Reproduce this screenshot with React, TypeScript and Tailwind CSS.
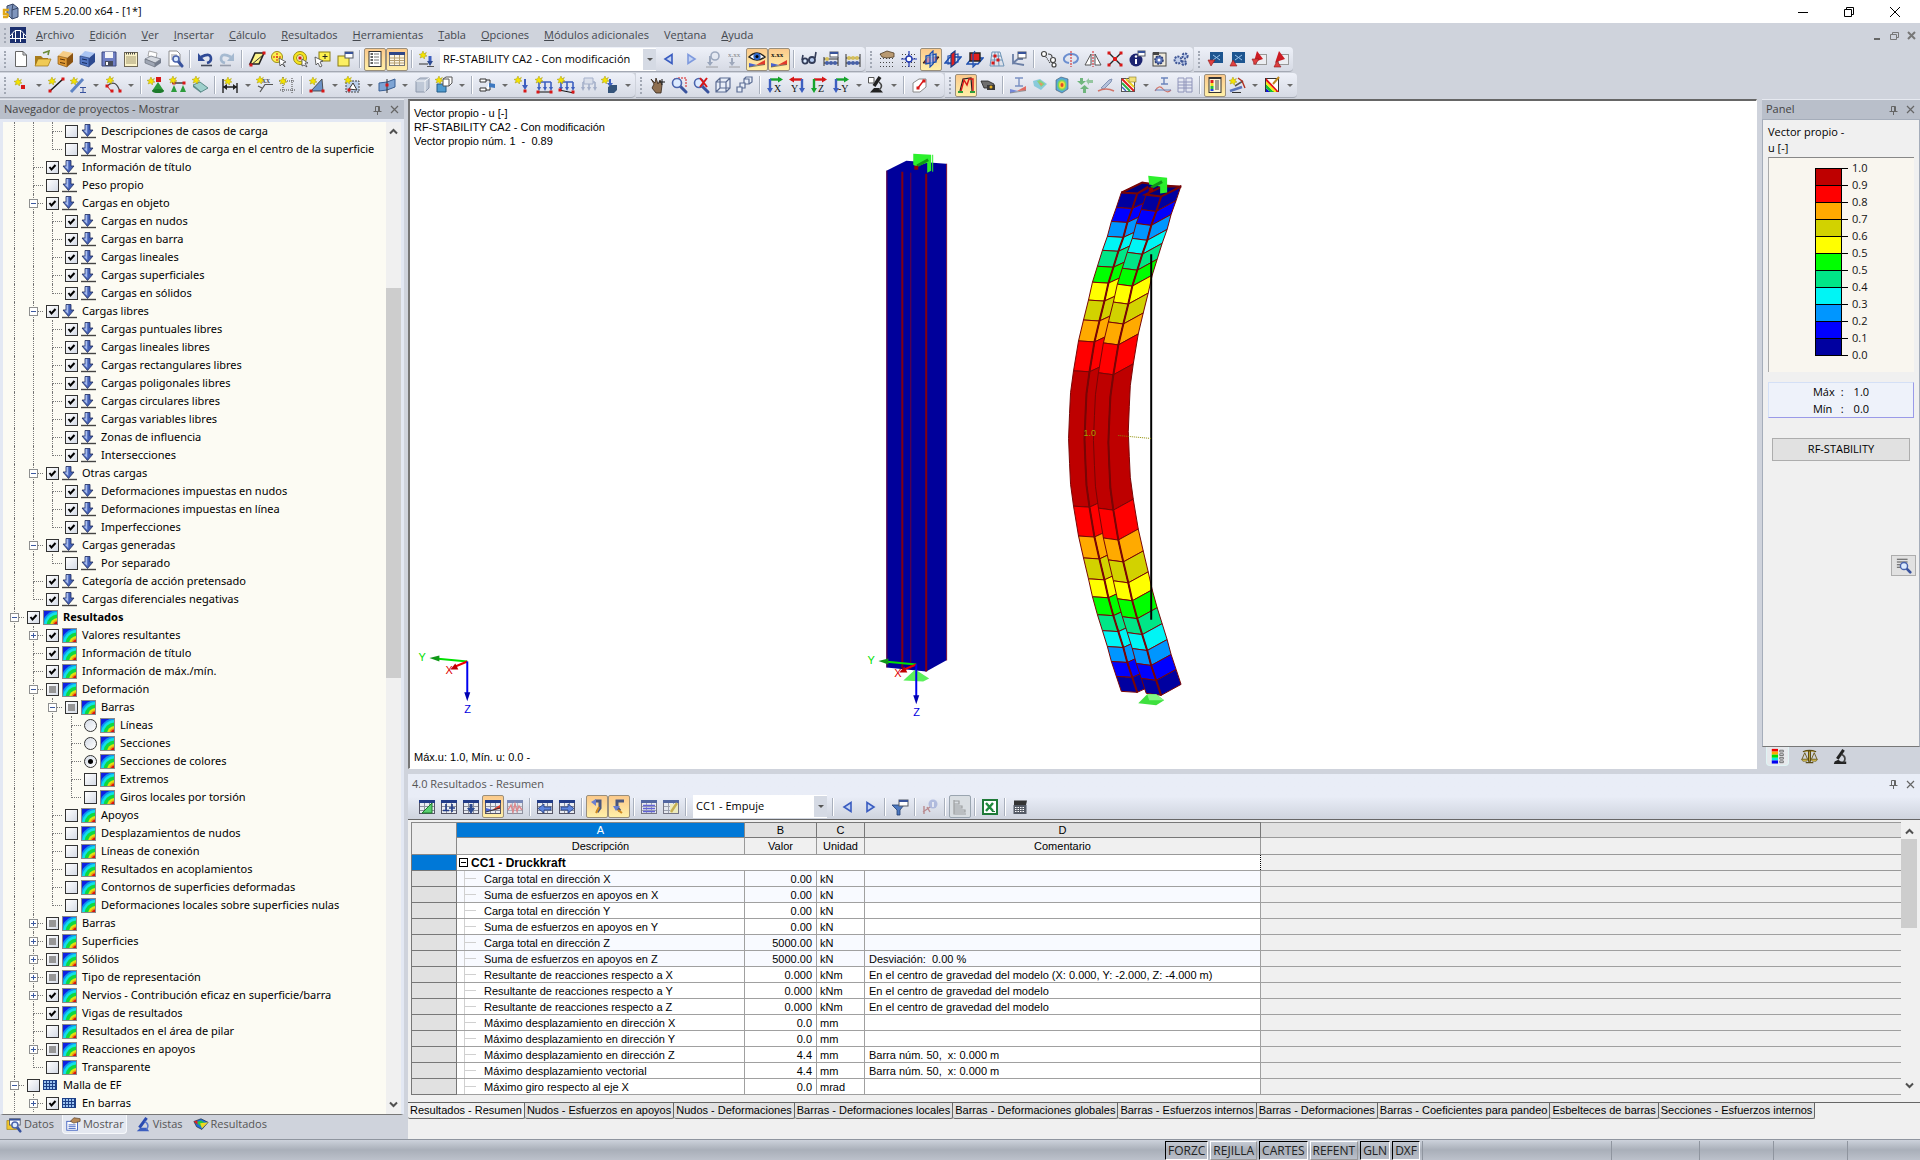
import React, { useState } from 'react';
import clsx from 'clsx';

/* ---------- small drawing parts shared by the toolbar icons ---------- */

const Star = ({ x = 4, y = 4 }: { x?: number; y?: number }) => (
  <g transform={`translate(${x} ${y})`}>
    <path d="M0 -4 L1 -1.2 L3.4 -2.6 L2 0 L4 1 L1.6 1.6 L1.4 4 L-0.4 2 L-3 3 L-1.8 0.6 L-4 -0.6 L-1.4 -1.2 Z" fill="#f4e400" stroke="#a89a10" strokeWidth="0.5" />
  </g>
);

const Dot = ({ x, y, c = '#d81818' }: { x: number; y: number; c?: string }) => (
  <rect x={x - 1.5} y={y - 1.5} width="3" height="3" fill={c} />
);

const Sheet = ({ x, y, w, h, fill = '#fff' }: { x: number; y: number; w: number; h: number; fill?: string }) => (
  <g>
    <rect x={x} y={y} width={w} height={h} fill={fill} stroke="#555a66" strokeWidth="1" />
    <rect x={x} y={y} width={w} height="2" fill="#38539a" />
  </g>
);

// Grid sheet used by the table toolbar
const Grid = () => (
  <g>
    <rect x="1.5" y="2.5" width="15" height="13" fill="#e9ecf2" stroke="#556" />
    <path d="M2 8.5H16M2 12.5H16M6.500 5V15M11.500 5V15" stroke="#8a8f9c" />
    <rect x="1" y="2" width="16" height="3" fill="#223c88" />
  </g>
);

const Lens = ({ x = 8, y = 7, r = 4.5 }: { x?: number; y?: number; r?: number }) => (
  <g>
    <path d={`M${x + r - 1} ${y + r - 1} L16 16`} stroke="#39539e" strokeWidth="3" strokeLinecap="round" />
    <circle cx={x} cy={y} r={r} fill="#dcebff" stroke="#4a64ad" strokeWidth="1.6" />
  </g>
);

const Dots = () => (
  <path d="M2 4.5H16M2 8.5H16M2 12.5H16M2 16.5H16" stroke="#444" strokeWidth="1" strokeDasharray="1 2" />
);

const Wedge = ({ y = 12 }: { y?: number }) => (
  <g>
    <path d={`M1 ${y + 5} L1 ${y + 1} L9 ${y + 3} Z`} fill="#4a64d0" />
    <path d={`M17 ${y - 2} L17 ${y + 2.5} L8 ${y + 3} Z`} fill="#e23a2a" />
    <path d={`M1 ${y + 5} L17 ${y + 2.5}`} stroke="#333" strokeWidth="0.6" />
  </g>
);

const ViewAxes = ({ a, b, t }: { a: string; b: string; t: string }) => (
  <g>
    <path d="M4 3.5H15" stroke={a} strokeWidth="2.4" />
    <path d="M12 0.5L17 3.5L12 6.5Z" fill={a} />
    <path d="M4 3V14" stroke={b} strokeWidth="2.4" />
    <path d="M1 12H7L4 17Z" fill={b} />
    <text x={t.length > 1 ? 6 : 8} y="16" fontSize="10" fontFamily="Liberation Serif, serif" fill="#111">{t}</text>
  </g>
);

const LoadFrame = ({ c = '#3d5fc0' }: { c?: string }) => (
  <g>
    <path d="M4 6V13M10 6V13M4 6H16M16 6V13" stroke={c} strokeWidth="1.6" fill="none" />
    <path d="M2 11H6L4 15ZM8 11H12L10 15ZM14 11H18L16 15Z" fill={c} />
  </g>
);

const icons: Record<string, React.ReactNode> = {
  nuevo: <path d="M3.5 1.5H11L14.5 5V16.5H3.5Z M11 1.5V5H14.5" fill="#fff" stroke="#666" />,
  abrir: <g><path d="M9 3L15 1L14 5" fill="none" stroke="#6a8a36" strokeWidth="1.6" /><path d="M1 6H7L9 8H14V15H1Z" fill="#a87c1c" /><path d="M4 9H17L14 16H1Z" fill="#f0ca55" stroke="#9c7416" strokeWidth="0.7" /></g>,
  archivadorNaranja: <g><path d="M2 6L7 1L17 3L11 8Z" fill="#f6cd86" /><path d="M2 6L11 8V17L2 14Z" fill="#e09a35" stroke="#8e5b13" strokeWidth="0.7" /><path d="M11 8L17 3V12L11 17Z" fill="#8c5412" /><path d="M4 9L9 10M4 12.5L9 13.5" stroke="#5b3508" /></g>,
  archivadorAzul: <g><path d="M2 6L7 1L17 3L11 8Z" fill="#a9c4f2" /><path d="M2 6L11 8V17L2 14Z" fill="#5478c4" stroke="#243d7a" strokeWidth="0.7" /><path d="M11 8L17 3V12L11 17Z" fill="#2d4a90" /><path d="M4 9L9 10M4 12.5L9 13.5" stroke="#172a5c" /></g>,
  guardar: <g><path d="M2 2H16V16H2Z" fill="#6f7fc4" stroke="#3e4a80" /><rect x="5" y="2" width="8" height="6" fill="#f3f4f8" /><rect x="5" y="11" width="8" height="5" fill="#474c5c" /><rect x="6" y="12" width="2" height="3" fill="#fff" /></g>,
  informe: <g><rect x="2.5" y="2.5" width="13" height="14" fill="#fbf3c9" stroke="#6d6655" /><path d="M4 7H14M4 9H14M4 11H14M4 13H14" stroke="#a49a72" /><path d="M4 3.5H14" stroke="#444" strokeWidth="2" strokeDasharray="1 1" /></g>,
  imprimir: <g><path d="M5 1L13 3L12 8L4 6Z" fill="#fff" stroke="#888" strokeWidth="0.7" /><path d="M1 9L7 6L17 9L11 13Z" fill="#d5d9e0" stroke="#6d7380" strokeWidth="0.7" /><path d="M1 9V13L11 17V13Z" fill="#9fa6b4" stroke="#5e6470" strokeWidth="0.6" /><path d="M11 13L17 9V13L11 17Z" fill="#747c8c" /></g>,
  previa: <g><path d="M3 1H11L14 4V16H3Z" fill="#fff" stroke="#777" strokeWidth="0.8" /><path d="M5 5H11M5 7H9M5 9H8" stroke="#999" /><Lens x={10} y={9} r={3} /></g>,
  deshacer: <g><path d="M2 3V11H9Z" fill="#2f4a96" /><path d="M5 7Q15 2 15 9Q15 12 11 13" fill="none" stroke="#2f4a96" strokeWidth="2.6" /><path d="M5 15.5H16" stroke="#444b5c" strokeWidth="1.6" /></g>,
  rehacer: <g opacity="0.6"><path d="M16 3V11H9Z" fill="#7c9cbc" /><path d="M13 7Q3 2 3 9Q3 12 7 13" fill="none" stroke="#7c9cbc" strokeWidth="2.6" /><path d="M2 15.5H13" stroke="#6b7284" strokeWidth="1.6" /></g>,
  selParalelo: <g><path d="M7 3H16L11 14H2Z" fill="#fcf48a" stroke="#222" strokeWidth="1.6" /><path d="M15 5L3 15" stroke="#333" /><Dot x={3} y={15} /><Dot x={16} y={3} /></g>,
  selCirculo: <g><circle cx="7" cy="7" r="5.5" fill="#fcf04e" stroke="#9b8d14" /><path d="M7 3V11M3 7H11" stroke="#d81818" strokeDasharray="2 1" /><path d="M9 8L16 12L13 13L15 17L12 14L10 16Z" fill="#fff" stroke="#444" strokeWidth="0.8" /></g>,
  selAnillo: <g><circle cx="8" cy="8" r="6.5" fill="#f8e61e" stroke="#9b8d14" /><circle cx="8" cy="8" r="3.5" fill="#fdf9d0" stroke="#9b8d14" /><Dot x={8} y={8} /><path d="M10 9L16 13L13 13L15 17L12 15L10 16Z" fill="#fff" stroke="#444" strokeWidth="0.8" /></g>,
  selCaja: <g><rect x="5" y="2" width="11" height="9" fill="#fcf04e" stroke="#8a7d12" /><path d="M11 4V9M8.5 6.5H13.5" stroke="#222" /><path d="M1 7L9 11L6 12L8 16L6 17L4 13L2 15Z" fill="#fff" stroke="#444" strokeWidth="0.8" /></g>,
  ventana: <g><rect x="2" y="6" width="11" height="10" fill="#fcef62" stroke="#8a7d12" /><Sheet x={9} y={2} w={8} h={6} /></g>,
  lista: <g><rect x="3" y="1.5" width="12" height="15" fill="#fff" stroke="#333" /><path d="M4.5 4H7M4.5 7H7M4.5 10H7M4.5 13H7" stroke="#333" strokeWidth="1.6" /><path d="M8 4H13M8 7H13M8 10H13M8 13H13" stroke="#777" /></g>,
  tabla: <g><rect x="1.5" y="2.5" width="15" height="13" fill="#fdf6e2" stroke="#777" /><rect x="1" y="2" width="16" height="3" fill="#2f4687" /><path d="M2 8H16M2 10.5H16M2 13H16M6.5 5V15M11.5 5V15" stroke="#b59e70" /></g>,
  cargaNueva: <g><Star x={5} y={5} /><path d="M1 14H10" stroke="#333" /><path d="M12 6V12" stroke="#3d5fc0" strokeWidth="3" /><path d="M9 11H15L12 16Z" fill="#2d4a90" /><path d="M9 16.5H16" stroke="#555" /></g>,
  anterior: <path d="M12 4.500V13.500L5 9Z" fill="#c4d4f4" stroke="#3a5cc0" strokeWidth="1.6" />,
  siguiente: <path d="M6 4.500V13.500L13 9Z" fill="#c4d4f4" stroke="#7f9ade" strokeWidth="1.6" />,
  siguienteTabla: <path d="M6 4.500V13.500L13 9Z" fill="#c4d4f4" stroke="#3a5cc0" strokeWidth="1.6" />,
  filtroCarga: <g opacity="0.6"><circle cx="11" cy="6" r="4" fill="#e4e9f2" stroke="#6d7f9e" strokeWidth="1.6" /><path d="M6 6V14" stroke="#6d7f9e" strokeWidth="2" /><path d="M3 12H9L6 16Z" fill="#6d7f9e" /><path d="M2 17H14" stroke="#777" /></g>,
  valoresGris: <g opacity="0.7"><text x="2" y="7" fontSize="7" fontFamily="Liberation Serif, serif" fill="#555">x.xx</text><path d="M6 8V14" stroke="#8591a8" strokeWidth="2" /><path d="M3 12H9L6 16Z" fill="#8591a8" /><path d="M3 17H14" stroke="#888" /></g>,
  ojo: <g><path d="M1 7Q9 -1 17 7Q9 13 1 7Z" fill="#fff" stroke="#222" strokeWidth="1.4" /><circle cx="9" cy="6.5" r="3.6" fill="#2d66c8" /><circle cx="9" cy="6.5" r="1.5" fill="#000" /><Wedge y={12} /></g>,
  valores: <g><text x="1" y="7" fontSize="7" fontWeight="bold" fontFamily="Liberation Serif, serif" fill="#111">x.xx</text><Wedge y={12} /></g>,
  gafas: <g><circle cx="5" cy="11" r="2.6" fill="#dcebff" stroke="#333c58" strokeWidth="1.8" /><circle cx="12" cy="10" r="3" fill="#b8cdf0" stroke="#333c58" strokeWidth="1.8" /><path d="M2 10L3 5M15 8L16 2M8 10H9" stroke="#333c58" strokeWidth="1.6" /></g>,
  abacoVentana: <g><path d="M2 7V16M16 7V16M2 9H16M2 13H16" stroke="#333" /><circle cx="5" cy="13" r="2" fill="#4660a8" /><circle cx="9" cy="13" r="2" fill="#4660a8" /><circle cx="13" cy="13" r="2" fill="#4660a8" /><circle cx="5" cy="9" r="2" fill="#d6c05a" /><Sheet x={8} y={2} w={8} h={5} /></g>,
  abaco: <g><path d="M2 4V17M16 4V17M2 8H16M2 13H16" stroke="#333" /><circle cx="5" cy="8" r="2" fill="#d6c05a" /><circle cx="9" cy="8" r="2" fill="#d6c05a" /><circle cx="13" cy="8" r="2" fill="#d6c05a" /><circle cx="5" cy="13" r="2" fill="#4660a8" /><circle cx="9" cy="13" r="2" fill="#4660a8" /><circle cx="13" cy="13" r="2" fill="#4660a8" /></g>,
  mallaMano: <g><Dots /><path d="M2 4L9 1L16 3V7L9 8L4 7Z" fill="#b99a72" stroke="#4e3b22" strokeWidth="0.8" /></g>,
  mallaPunto: <g><Dots /><path d="M9 1V17M1 9H17" stroke="#2038b0" strokeWidth="1.2" /><circle cx="9" cy="9" r="3" fill="#fff" stroke="#2038b0" strokeWidth="1.4" /></g>,
  planoRojo: <g><path d="M1 13L6 7H17L12 13Z" fill="#e02020" stroke="#222" /><path d="M4 6L14 4V12L4 14Z" fill="#b9d6ff" fillOpacity="0.6" stroke="#1d4fb0" strokeWidth="1.4" /><path d="M11 1L8 4V17L11 14Z" fill="#b9d6ff" fillOpacity="0.6" stroke="#1d4fb0" strokeWidth="1.2" /></g>,
  planoAzul: <g><path d="M1 13L6 7H17L12 13Z" fill="none" stroke="#1d4fb0" strokeWidth="1.4" /><path d="M4 6L14 4V12L4 14Z" fill="none" stroke="#1d4fb0" strokeWidth="1.2" /><path d="M11 1L7 4V17L11 14Z" fill="#e02020" stroke="#1d3c80" strokeWidth="1.2" /></g>,
  planoLleno: <g><path d="M1 14L6 8H17L12 14Z" fill="none" stroke="#1d4fb0" strokeWidth="1.4" /><path d="M4 3H14V11H4Z" fill="#e02020" stroke="#222" strokeWidth="1.4" /><path d="M9 1L7 4V17L10 14" fill="none" stroke="#1d4fb0" strokeWidth="1.2" /></g>,
  red: <g><path d="M4 2H12L16 16H2ZM4 6H13M3 10H14M7 2L6 16M10 2L11 16" fill="none" stroke="#6c93b6" /><Dot x={7} y={6} /><Dot x={10} y={10} /><Dot x={5} y={13} /></g>,
  arbolVentana: <g><path d="M3 4V13L8 9H13M3 13L14 15" fill="none" stroke="#6b7fa6" strokeWidth="1.8" /><Sheet x={8} y={2} w={8} h={6} /></g>,
  anillos: <g fill="#fff" stroke="#444" strokeWidth="1.2"><circle cx="4" cy="4" r="2.5" /><circle cx="13" cy="10" r="2.5" /><circle cx="14" cy="15" r="2" /><path d="M8 4Q12 4 12 7" fill="none" /><path d="M6 7L10 13" strokeDasharray="1 1" /></g>,
  rotar: <g><path d="M7 13Q1 12 2 8Q4 4 9 4Q15 4 16 8Q16 12 11 13" fill="none" stroke="#6c8fd0" strokeWidth="2" /><path d="M9 1V17" stroke="#d81818" strokeDasharray="2 1" /></g>,
  simetria: <g><path d="M7 4V15H1ZM11 4V15H17Z" fill="#fff" stroke="#555" /><path d="M9 1V17" stroke="#d81818" strokeDasharray="2 1" /></g>,
  nudoX: <g><path d="M3 3L15 15M15 3L3 15" stroke="#222" strokeWidth="1.4" /><Dot x={3} y={3} /><Dot x={15} y={3} /><Dot x={3} y={15} /><Dot x={15} y={15} /><rect x="7" y="7" width="4" height="4" fill="#d81818" /></g>,
  info: <g><circle cx="8" cy="10" r="6.5" fill="#1c2470" /><path d="M8 9V14" stroke="#fff" strokeWidth="2" /><circle cx="8" cy="6.5" r="1.2" fill="#fff" /><Sheet x={10} y={1} w={7} h={5} /></g>,
  ajustes: <g><rect x="3" y="3" width="13" height="13" fill="#efeadb" stroke="#444" /><rect x="3" y="2" width="6" height="3" fill="#444" /><circle cx="9" cy="10" r="4" fill="#5b74b8" stroke="#2b3c74" strokeDasharray="2 1" strokeWidth="1.6" /><circle cx="9" cy="10" r="1.5" fill="#fff" /></g>,
  engranajes: <g fill="#c3d0ec" stroke="#3f5696" strokeWidth="2" strokeDasharray="2 1"><circle cx="6" cy="10" r="3.4" /><circle cx="13" cy="6" r="2.6" /><circle cx="12" cy="13" r="2" /></g>,
  azulBajar: <g><rect x="4" y="2" width="13" height="11" fill="#1d5590" /><path d="M7 5L14 10M14 5L7 10" stroke="#9cc6ee" /><path d="M2 10H9L5 16Z" fill="#e04040" stroke="#8c1a1a" strokeWidth="0.6" /></g>,
  azulSubir: <g><rect x="4" y="2" width="13" height="11" fill="#1d5590" /><path d="M7 5L14 10M14 5L7 10" stroke="#9cc6ee" /><path d="M2 16H9L5 10Z" fill="#e04040" stroke="#8c1a1a" strokeWidth="0.6" /></g>,
  pdfBajar: <g><rect x="6.5" y="4.5" width="10" height="10" fill="#eceef2" stroke="#999" /><path d="M7 1L13 9L7 11L3 15Z" fill="#cc1a22" /><path d="M2 9H9L5 15Z" fill="#e04040" stroke="#8c1a1a" strokeWidth="0.6" /></g>,
  pdfSubir: <g><rect x="6.5" y="4.5" width="10" height="10" fill="#eceef2" stroke="#999" /><path d="M7 1L13 9L7 11L3 13Z" fill="#cc1a22" /><path d="M2 17H9L5 11Z" fill="#e04040" stroke="#8c1a1a" strokeWidth="0.6" /></g>,

  nudo: <g><Star x={6} y={6} /><rect x="9" y="9" width="4" height="4" fill="#d81818" /></g>,
  linea: <g><path d="M3 15L16 3" stroke="#111" strokeWidth="1.4" /><Dot x={3} y={15} /><Dot x={16} y={3} /><Star x={5} y={5} /></g>,
  barra: <g><path d="M2 16L14 3" stroke="#5d83c4" strokeWidth="3" /><path d="M11 11.500H17M14 11V17M11 16.500H17" stroke="#39539e" /><Star x={5} y={5} /></g>,
  arco: <g><path d="M3 10Q12 2 16 16" fill="none" stroke="#444" strokeWidth="1.2" /><path d="M3 10L8 16" stroke="#d81818" /><Dot x={3} y={10} /><Dot x={16} y={15} /><Dot x={8} y={15} /><Star x={6} y={4} /></g>,
  apoyo: <g><rect x="9" y="1" width="5" height="5" fill="#d81818" /><path d="M11 6L17 15H5Z" fill="#2d9c3c" /><ellipse cx="11" cy="15" rx="6" ry="2" fill="#1d7a2b" /><Star x={4} y={5} /></g>,
  apoyoLinea: <g><path d="M3 7L15 7" stroke="#333" strokeWidth="1.4" /><Dot x={5} y={7} /><Dot x={15} y={7} /><path d="M5 9L8 16H2ZM14 9L17 16H11Z" fill="#2d9c3c" /><Star x={4} y={4} /></g>,
  losa: <g><path d="M2 9L9 6L17 12L10 16Z" fill="#9ed0cc" stroke="#5a8a88" /><path d="M2 9V11L10 17V16Z" fill="#5a8a88" /><Star x={5} y={4} /></g>,
  cota: <g><path d="M2 3V17M16 7V17M2 11H16" stroke="#222" strokeWidth="1.4" /><path d="M2 11L6 8V14ZM16 11L12 8V14Z" fill="#222" /><Star x={7} y={5} /></g>,
  cotaTexto: <g><text x="6" y="7" fontSize="8" fontFamily="Liberation Serif, serif" fill="#222">xx</text><path d="M17 8.500H9L4 16M2 10L6 12" fill="none" stroke="#555" strokeWidth="1.2" /><Star x={4} y={4} /></g>,
  guia: <g><path d="M5 1V17M1 5H17M14 2V17M2 14H17" stroke="#444" strokeDasharray="1 1" /><Star x={5} y={5} /></g>,
  superficie: <g><path d="M3 15L14 3L15 15Z" fill="#6d93c8" stroke="#333" strokeWidth="0.8" /><Dot x={3} y={15} /><Dot x={15} y={15} /><Star x={5} y={5} /></g>,
  hueco: <g><rect x="3" y="5" width="13" height="11" fill="#bcd0ec" stroke="#444" strokeDasharray="2 1" /><path d="M6 13L10 7L14 14Z" fill="#fff" stroke="#333" /><Dot x={6} y={14} /><Star x={5} y={4} /></g>,
  solidoPlano: <g><path d="M1 7L9 6L17 3V11L9 14L1 15Z" fill="#7ea4d4" stroke="#395f94" /><path d="M9 3V17" stroke="#333" /><Dot x={9} y={9} /></g>,
  solido: <g opacity="0.7"><path d="M3 5L7 2H16V12L12 16H3Z" fill="#b0bccd" stroke="#6c7a92" /><path d="M3 5H12V16M12 5L16 2" fill="none" stroke="#fff" /></g>,
  solidoNuevo: <g><path d="M2 8H11V16H2Z" fill="#4e9bd0" stroke="#235a86" /><path d="M8 3H14V10H8Z M8 3L11 1H17V7L14 10" fill="#fff" stroke="#555" /><Star x={4} y={4} /></g>,
  seccion: <g><path d="M2 3H8V6H2ZM2 12H8V15H2ZM8 4H12M8 14H12V4" fill="#fff" stroke="#333" /><path d="M11 7L17 8V12L11 11Z" fill="#3d78c0" /></g>,
  cargaNudo: <g><path d="M12 3V11" stroke="#3d5fc0" strokeWidth="2" /><path d="M9 9H15L12 14Z" fill="#3d5fc0" /><Dot x={12} y={15} /><Star x={5} y={4} /></g>,
  cargaBarra: <g><LoadFrame /><path d="M2 16H17" stroke="#111" /><Dot x={3} y={16} /><Dot x={16} y={16} /><Star x={4} y={4} /></g>,
  cargaLinea: <g><LoadFrame /><path d="M2 14L17 17" stroke="#111" /><Dot x={3} y={14} /><Dot x={16} y={16} /><Star x={4} y={4} /></g>,
  cargaSuperficie: <g opacity="0.7"><LoadFrame c="#8a99ba" /><path d="M5 2H14V8H5Z" fill="#d5dbe8" stroke="#8a99ba" /></g>,
  cargaSolido: <g><path d="M9 3V8" stroke="#3d5fc0" strokeWidth="2" /><path d="M6 7H12L9 11Z" fill="#3d5fc0" /><path d="M7 11L10 9H16V14L13 17H7Z" fill="#35547a" /><Star x={4} y={4} /></g>,
  mano: <g><path d="M3 3L6 8L4 12L8 17H13L14 9L12 4L10 8L8 2L7 7Z" fill="#8f6f50" stroke="#33261a" strokeWidth="0.8" /><path d="M11 6H17M14 3V9" stroke="#111" /></g>,
  zoomVentana: <g><path d="M8 2H16V11M5 2V11" stroke="#d81818" strokeDasharray="2 1" fill="none" /><Lens x={7} y={7} r={4.5} /></g>,
  zoomQuitar: <g><Lens x={7} y={7} r={4.5} /><path d="M8 2L15 11M15 2L8 11" stroke="#d81818" strokeWidth="2" /></g>,
  cubo: <path d="M2 6H12V16H2Z M2 6L6 2H16V12L12 16 M12 6L16 2 M6 2V12H16 M6 12L2 16" fill="#e8eef8" stroke="#5b6c93" strokeWidth="1.2" />,
  cubos: <g fill="#e8eef8" stroke="#5b6c93" strokeWidth="1.2"><path d="M8 3H13V8H8ZM8 3L10 1H16V6L13 8" /><path d="M4 7H9V12H4Z" /><path d="M1 11H6V16H1Z" /></g>,
  vistaX: <ViewAxes a="#16a42c" b="#3d5fc0" t="X" />,
  vistaY: <g><path d="M3 3.5H14" stroke="#d81818" strokeWidth="2.4" /><path d="M6 0.5L1 3.5L6 6.500Z" fill="#d81818" /><path d="M14 3V14" stroke="#3d5fc0" strokeWidth="2.4" /><path d="M11 12H17L14 17Z" fill="#3d5fc0" /><text x="3" y="16" fontSize="10" fontFamily="Liberation Serif, serif" fill="#111">Y</text></g>,
  vistaZ: <ViewAxes a="#d81818" b="#16a42c" t="Z" />,
  vistaMenosY: <ViewAxes a="#16a42c" b="#3d5fc0" t="-Y" />,
  microscopio: <g><path d="M13 1L7 10" stroke="#222" strokeWidth="3.4" /><path d="M3 16.500H16L12 12H7Z" fill="#222" /><path d="M1.500 1.500H7V7H1.500Z" fill="#fff" stroke="#555" /><path d="M12 6Q17 10 12 14" fill="none" stroke="#444" strokeWidth="1.6" /></g>,
  corte: <g><path d="M3 7L9 3H16V11L10 16H3Z" fill="#fff" stroke="#888" /><path d="M8 12L14 4" stroke="#d81818" strokeWidth="1.4" /><Dot x={14} y={5} /><Dot x={8} y={12} /></g>,
  portico: <g><path d="M3 15L6 3L14 2L15 15" fill="none" stroke="#222" strokeWidth="1.2" /><path d="M4 15L7 4L10 9L12 3H16L16 15" fill="none" stroke="#d81818" strokeWidth="1.4" /><path d="M1 15H6V17H1ZM13 15H18V17H13Z" fill="#2d9c3c" /></g>,
  camara: <g><path d="M2 5H9L15 8V12H5Z" fill="#6e6e6e" stroke="#222" strokeWidth="0.8" /><rect x="8" y="9" width="8" height="5" fill="#3a3a3a" /><circle cx="12" cy="11" r="1.5" fill="#e8b020" /></g>,
  perfilRojo: <g opacity="0.7"><path d="M6 2H14M10 2V10M6 10H14" stroke="#4d6cb0" strokeWidth="1.4" /><Wedge y={12} /></g>,
  isoSuperficie: <g opacity="0.85"><path d="M2 5L9 3L16 8L10 14L3 10Z" fill="#7ac6d8" /><path d="M6 5L9 4L14 8L10 11Z" fill="#76d06a" /><path d="M8 6L12 8L10 10Z" fill="#f08048" /></g>,
  isoSolido: <g><path d="M3 4L8 1L15 3V13L9 17L3 14Z" fill="#58a8d8" stroke="#456" strokeWidth="0.6" /><ellipse cx="9" cy="9" rx="4.5" ry="5.5" fill="#74d860" /><ellipse cx="9" cy="9" rx="3" ry="3.8" fill="#f4d838" /><ellipse cx="9" cy="9" rx="1.5" ry="2" fill="#e04828" /></g>,
  reacciones: <g fill="#5cae6a" opacity="0.85"><path d="M5 2H8V5H11L6.500 9L2 5H5Z" /><path d="M11 5L14 2V4H18V7H14V9Z" opacity="0.7" /><path d="M11 17H8V13H5L9.500 9L14 13H11Z" /></g>,
  pluma: <g opacity="0.8"><path d="M4 12L12 4L15 3L14 6L7 13Z" fill="#a8b8d6" stroke="#6b7fa6" /><path d="M1 15Q9 11 17 15" fill="none" stroke="#d05a4a" strokeWidth="1.4" /></g>,
  franjas: <g><rect x="2.5" y="2.5" width="13" height="13" fill="#fff" stroke="#555" /><path d="M3 3L15 15" stroke="#e02020" strokeWidth="2" /><path d="M3 7L11 15" stroke="#28b048" strokeWidth="2" /><path d="M3 11L7 15" stroke="#3d5fc0" strokeWidth="1.4" /><path d="M7 3L15 11" stroke="#e8d020" strokeWidth="2" /><rect x="10" y="1" width="7" height="5" fill="#f2e27a" stroke="#877a20" strokeWidth="0.6" /></g>,
  perfilOnda: <g opacity="0.8"><path d="M7 2H14M10 2V8M7 8H14" stroke="#4d6cb0" strokeWidth="1.4" /><path d="M1 15Q5 8 9 13T17 14" fill="none" stroke="#d05a4a" strokeWidth="1.2" /><path d="M1 14H17" stroke="#4d6cb0" /></g>,
  tablaGris: <g opacity="0.7"><path d="M2 2H8V16H2ZM10 2H16V16H10ZM2 6H16M2 9H16M2 12H16" fill="#e6e9f4" stroke="#6c72a4" /></g>,
  panelColor: <g><rect x="3" y="1.5" width="12" height="15" fill="#fdf6d8" stroke="#333" /><rect x="3" y="1" width="12" height="2" fill="#333" /><rect x="4.5" y="4" width="3" height="3" fill="#e02020" /><rect x="4.5" y="7" width="3" height="3" fill="#f4e020" /><rect x="4.5" y="10" width="3" height="3" fill="#20c040" /><rect x="4.5" y="13" width="3" height="2" fill="#2040e0" /><path d="M9 5H13M9 7H13M9 9H13M9 11H13M9 13H13" stroke="#444" /></g>,
  varita: <g><path d="M2 15L14 11" stroke="#5b74b8" strokeWidth="2.4" /><path d="M7 10L15 5" stroke="#555" strokeWidth="1.6" /><path d="M10 2L14 5L17 12" fill="none" stroke="#b03020" strokeWidth="1.4" /><path d="M4 16.500H13" stroke="#333" /><Star x={5} y={5} /></g>,
  arcoiris: <g><rect x="2.5" y="2.5" width="13" height="13" fill="#fff" stroke="#333" /><path d="M3 12V16H7Z" fill="#1414d8" /><path d="M3 8V12L7 16H11Z" fill="#18c030" /><path d="M3 5V8L11 16H14Z" fill="#f8ec10" /><path d="M3 2V5L14 16H16Z" fill="#e81010" /><path d="M10 8L16 1" stroke="#c08a20" strokeWidth="2" /></g>,

  tTriangulo: <g><Grid /><path d="M4 15L14 5V15Z" fill="#58d070" stroke="#1d7a2b" /></g>,
  tApoyo: <g><Grid /><path d="M6 6V12M3 12.500H9M12 6V14M9 10H15" stroke="#223c88" strokeWidth="1.6" /></g>,
  tCarga: <g><Grid /><path d="M9 6V12" stroke="#2d4a90" strokeWidth="3" /><path d="M5 10H13L9 16Z" fill="#2d4a90" /></g>,
  tResultado: <g><Grid /><path d="M2 14V10L9 12Z" fill="#4a64d0" /><path d="M16 7V11L8 12Z" fill="#e23a2a" /><path d="M2 14L16 10" stroke="#333" /></g>,
  tOnda: <g opacity="0.55"><Grid /><path d="M2 12L5 7L7 14L9 6L11 13L13 8L16 12" fill="none" stroke="#e04040" strokeWidth="1.4" /></g>,
  tIzq: <g><Grid /><path d="M2 10.500L8 6V9H15V12H8V15Z" fill="#5f86dc" stroke="#1f3a80" strokeWidth="0.8" /></g>,
  tDer: <g><Grid /><path d="M16 10.500L10 6V9H3V12H10V15Z" fill="#5f86dc" stroke="#1f3a80" strokeWidth="0.8" /></g>,
  tSelTabla: <g><path d="M7 3H12V10L9 14" fill="none" stroke="#4a567e" strokeWidth="3" /><path d="M3 4L8 1V8Z" fill="#6b7fd0" /><path d="M8 15L11 9" stroke="#d08a20" strokeWidth="2" fill="none" /></g>,
  tSelGraf: <g><path d="M14 3H7V9L10 13" fill="none" stroke="#4a567e" strokeWidth="3" /><path d="M3 8H10L6 13Z" fill="#6b7fd0" /><path d="M8 12L12 15" stroke="#d08a20" strokeWidth="2" fill="none" /></g>,
  tFilas: <g opacity="0.75"><Grid /><path d="M3 7.500H15M3 10.500H15M3 13.500H15" stroke="#3a3ad0" strokeWidth="1.6" /></g>,
  tEditar: <g opacity="0.75"><Grid /><path d="M8 6H16V15H8Z" fill="#f4f0b0" /><path d="M15 5L9 14" stroke="#c0a020" strokeWidth="2.4" /></g>,
  tFiltro: <g><path d="M1 7H13L9 12V17H6V12Z" fill="#4c78c0" stroke="#223c70" strokeWidth="0.8" /><Sheet x={8} y={2} w={9} h={6} /></g>,
  tInfo: <g opacity="0.55"><circle cx="12" cy="6" r="4.5" fill="#8a9ad0" /><path d="M12 4V9" stroke="#fff" strokeWidth="1.6" /><path d="M2 14L9 9M3 8V16M6 9L9 14" stroke="#a04848" strokeWidth="1.4" /></g>,
  tRelacion: <g opacity="0.6"><path d="M3 2V16H15M3 3H8V6H3M3 8H11V10H3M3 12H14V14H3" fill="none" stroke="#777" strokeWidth="1.2" /></g>,
  tExcel: <g><rect x="2" y="2" width="14" height="14" fill="#fff" stroke="#1f7a38" strokeWidth="2" /><path d="M5 5L12 13M12 5L5 13" stroke="#1f8a3c" strokeWidth="2.4" /><path d="M11 13.500H14" stroke="#1f7a38" /></g>,
  tCalc: <g><path d="M3 2.500H16L15 7H3Z" fill="#333" /><rect x="2.5" y="7" width="13" height="9" fill="#555b66" /><path d="M4 9.5H14M4 11.5H14M4 13.5H14" stroke="#fff" strokeDasharray="1.5 1" /></g>,
};

type Item = string;

// Entries: icon name, "*name" for a pressed button, "|" separator, "v" drop-down arrow
const barsTop: Item[][] = [
  ['nuevo', 'abrir', 'archivadorNaranja', 'archivadorAzul', 'guardar', 'informe', 'imprimir', 'previa', '|', 'deshacer', 'rehacer', '|', 'selParalelo', 'selCirculo', 'selAnillo', 'selCaja', 'ventana', '|', '*lista', '*tabla', '|', 'cargaNueva', 'combo', 'anterior', 'siguiente', 'filtroCarga', 'valoresGris', '*ojo', '*valores', '|', 'gafas', 'abacoVentana', 'abaco'],
  ['mallaMano', 'mallaPunto', '*planoRojo', 'planoAzul', 'planoLleno', 'red', 'arbolVentana', '|', 'anillos', 'rotar', 'simetria', 'nudoX', 'info', 'ajustes', 'engranajes'],
  ['azulBajar', 'azulSubir', 'pdfBajar', 'pdfSubir'],
];

const barsBottom: Item[][] = [
  ['nudo', 'v', 'linea', 'barra', 'v', 'arco', 'v', '|', 'apoyo', 'apoyoLinea', 'losa', '|', 'cota', 'v', 'cotaTexto', 'guia', '|', 'superficie', 'v', 'hueco', 'v', 'solidoPlano', 'v', 'solido', 'solidoNuevo', 'v', '|', 'seccion', 'v', 'cargaNudo', 'cargaBarra', 'cargaLinea', 'cargaSuperficie', 'cargaSolido', 'v'],
  ['mano', 'zoomVentana', 'zoomQuitar', 'cubo', 'cubos', '|', 'vistaX', 'vistaY', 'vistaZ', 'vistaMenosY', 'v', 'microscopio', 'v', '|', 'corte', 'v'],
  ['*portico', 'camara', '|', 'perfilRojo', 'isoSuperficie', 'isoSolido', 'reacciones', 'pluma', 'franjas', 'v', 'perfilOnda', 'tablaGris', '|', '*panelColor', 'varita', 'v', 'arcoiris', 'v'],
];

const tableBar: Item[] = ['tTriangulo', 'tApoyo', 'tCarga', '*tResultado', 'tOnda', '|', 'tIzq', 'tDer', '|', '*tSelTabla', '*tSelGraf', '|', 'tFilas', 'tEditar', '|', 'combo', '|', 'anterior', 'siguienteTabla', '|', 'tFiltro', '|', 'tInfo', '|', '-tRelacion', '|', 'tExcel', '|', 'tCalc'];

const ToolButton = ({ name }: { name: string }) => {
  const active = name[0] === '*';
  const soft = name[0] === '-';
  const key = active || soft ? name.slice(1) : name;
  return (
    <button
      type="button"
      aria-label={key}
      className={clsx(
        'flex h-[23px] w-[22px] shrink-0 items-center justify-center rounded-xs border',
        active && 'border-[#9a8f7c] bg-linear-to-b from-[#fbc98b] to-[#fff0a8]',
        soft && 'border-[#9aa5b0] bg-[#d9dee2]',
        !active && !soft && 'border-transparent'
      )}
    >
      <svg viewBox="0 0 18 18" className="h-[18px] w-[18px] shrink-0">{icons[key]}</svg>
    </button>
  );
};

const Combo = ({ value, label, className }: { value: string; label: string; className: string }) => (
  <span className={clsx('grid shrink-0', className)}>
    <select aria-label={label} defaultValue={value} className="col-start-1 row-start-1 h-[23px] w-full appearance-none bg-white pl-[3px] text-[11px] text-black outline-none">
      <option>{value}</option>
    </select>
    <span className="pointer-events-none col-start-1 row-start-1 flex h-[21px] w-[13px] items-center justify-center self-center justify-self-end bg-[#d5dae4]">
      <span className="border-x-[3px] border-t-[3px] border-x-transparent border-t-[#555]" />
    </span>
  </span>
);

const ToolItems = ({ items, combo }: { items: Item[]; combo?: React.ReactNode }) => (
  <>
    {items.map((it, i) => {
      if (it === '|') return <span key={i} className="mx-[3px] h-[18px] w-[2px] shrink-0 border-l border-[#a9b0bd] bg-white" />;
      if (it === 'combo') return <React.Fragment key={i}>{combo}</React.Fragment>;
      if (it === 'v') {
        return (
          <button key={i} type="button" aria-label="Más" className="flex h-[23px] w-[13px] shrink-0 items-center justify-center">
            <span className="border-x-[3px] border-t-[3px] border-x-transparent border-t-[#6a6a6a]" />
          </button>
        );
      }
      return <ToolButton key={i} name={it} />;
    })}
  </>
);

const ToolBar = ({ items, combo }: { items: Item[]; combo?: React.ReactNode }) => (
  <div className="flex h-[25px] items-center rounded-r-sm border-b border-[#a4a9b4] bg-linear-to-b from-[#eef1f9] to-[#d6dae4] pr-px">
    <span className="mr-[3px] ml-1 h-[17px] w-[3px] border-l-2 border-dotted border-[#a2a8b4]" />
    <ToolItems items={items} combo={combo} />
  </div>
);

/* ---------- project navigator ---------- */

// [level, state, icon, text, expander, last child]
// state: 1 checked, 0 empty, 2 mixed, r radio, R selected radio
type Row = [number, string, string, string, string?, boolean?];

const rows: Row[] = [
  [2, '0', 'c', 'Descripciones de casos de carga'],
  [2, '0', 'c', 'Mostrar valores de carga en el centro de la superficie', '', true],
  [1, '1', 'c', 'Información de título'],
  [1, '0', 'c', 'Peso propio'],
  [1, '1', 'c', 'Cargas en objeto', '-'],
  [2, '1', 'c', 'Cargas en nudos'],
  [2, '1', 'c', 'Cargas en barra'],
  [2, '1', 'c', 'Cargas lineales'],
  [2, '1', 'c', 'Cargas superficiales'],
  [2, '1', 'c', 'Cargas en sólidos', '', true],
  [1, '1', 'c', 'Cargas libres', '-'],
  [2, '1', 'c', 'Cargas puntuales libres'],
  [2, '1', 'c', 'Cargas lineales libres'],
  [2, '1', 'c', 'Cargas rectangulares libres'],
  [2, '1', 'c', 'Cargas poligonales libres'],
  [2, '1', 'c', 'Cargas circulares libres'],
  [2, '1', 'c', 'Cargas variables libres'],
  [2, '1', 'c', 'Zonas de influencia'],
  [2, '1', 'c', 'Intersecciones', '', true],
  [1, '1', 'c', 'Otras cargas', '-'],
  [2, '1', 'c', 'Deformaciones impuestas en nudos'],
  [2, '1', 'c', 'Deformaciones impuestas en línea'],
  [2, '1', 'c', 'Imperfecciones', '', true],
  [1, '1', 'c', 'Cargas generadas', '-'],
  [2, '0', 'c', 'Por separado', '', true],
  [1, '1', 'c', 'Categoría de acción pretensado'],
  [1, '1', 'c', 'Cargas diferenciales negativas', '', true],
  [0, '1', 'r', 'Resultados', '-'],
  [1, '1', 'r', 'Valores resultantes', '+'],
  [1, '1', 'r', 'Información de título'],
  [1, '1', 'r', 'Información de máx./mín.'],
  [1, '2', 'r', 'Deformación', '-'],
  [2, '2', 'r', 'Barras', '-'],
  [3, 'r', 'r', 'Líneas'],
  [3, 'r', 'r', 'Secciones'],
  [3, 'R', 'r', 'Secciones de colores'],
  [3, '0', 'r', 'Extremos'],
  [3, '0', 'r', 'Giros locales por torsión', '', true],
  [2, '0', 'r', 'Apoyos'],
  [2, '0', 'r', 'Desplazamientos de nudos'],
  [2, '0', 'r', 'Líneas de conexión'],
  [2, '0', 'r', 'Resultados en acoplamientos'],
  [2, '0', 'r', 'Contornos de superficies deformadas'],
  [2, '0', 'r', 'Deformaciones locales sobre superficies nulas', '', true],
  [1, '2', 'r', 'Barras', '+'],
  [1, '2', 'r', 'Superficies', '+'],
  [1, '2', 'r', 'Sólidos', '+'],
  [1, '2', 'r', 'Tipo de representación', '+'],
  [1, '1', 'r', 'Nervios - Contribución eficaz en superficie/barra', '+'],
  [1, '1', 'r', 'Vigas de resultados'],
  [1, '0', 'r', 'Resultados en el área de pilar'],
  [1, '2', 'r', 'Reacciones en apoyos', '+'],
  [1, '0', 'r', 'Transparente', '', true],
  [0, '0', 'm', 'Malla de EF', '-'],
  [1, '1', 'm', 'En barras', '+'],
];

const TreeIcon = ({ kind }: { kind: string }) => {
  if (kind === 'c') {
    return (
      <svg viewBox="0 0 15 15" className="h-[15px] w-[15px] shrink-0">
        <path d="M0 13.5H15" stroke="#444" strokeWidth="1.4" />
        <path d="M4 0.500H9V6H12L6.500 12.500L1 6H4Z" fill="#4461b8" stroke="#1f2c5c" strokeWidth="0.8" />
        <path d="M4.500 1H6.300V10L2.500 6.500H4.500Z" fill="#a9bdec" />
      </svg>
    );
  }
  if (kind === 'm') {
    return (
      <svg viewBox="0 0 15 15" className="h-[15px] w-[15px] shrink-0">
        <rect x="0" y="2" width="14" height="10" fill="#1d3f86" />
        <path d="M1 3h2v2h-2zM4 3h2v2h-2zM7 3h2v2h-2zM10 3h2v2h-2zM1 6h2v2h-2zM4 6h2v2h-2zM7 6h2v2h-2zM10 6h2v2h-2zM1 9h2v2h-2zM4 9h2v2h-2zM7 9h2v2h-2zM10 9h2v2h-2z" fill="#9cc4f0" />
      </svg>
    );
  }
  return (
    <svg viewBox="0 0 15 15" className="h-[15px] w-[15px] shrink-0 border border-[#8a8a8a]">
      <rect width="15" height="15" fill="#1020e0" />
      <circle cx="16" cy="17" r="18" fill="#1090f0" />
      <circle cx="16" cy="17" r="16" fill="#10e0e8" />
      <circle cx="16" cy="17" r="13" fill="#10d840" />
      <circle cx="16" cy="17" r="9" fill="#e0e010" />
      <circle cx="16" cy="17" r="6.5" fill="#f08818" />
      <circle cx="16" cy="17" r="5" fill="#d81010" />
    </svg>
  );
};

const TreeRow = ({ row }: { row: Row }) => {
  const [level, state, icon, text, exp, last] = row;
  const [on, setOn] = useState(state === '1');
  const radio = state === 'r' || state === 'R';
  return (
    <li className="flex h-[18px] items-center">
      {Array.from({ length: level }, (_, i) => (
        <span key={i} className="ml-[9px] h-[18px] w-[10px] shrink-0 border-l border-dotted border-[#777]" />
      ))}
      <span className="relative grid h-[18px] w-[19px] shrink-0 grid-cols-[9px_10px] grid-rows-[10px_8px]">
        <span className="col-start-2 border-b border-l border-dotted border-[#777]" />
        <span className={clsx('col-start-2', !last && 'border-l border-dotted border-[#777]')} />
        {exp && (
          <button type="button" aria-label={exp === '-' ? 'Contraer' : 'Expandir'} className="absolute top-[5px] left-[5px] h-[9px] w-[9px] border border-[#8e8f8f] bg-white">
            <svg viewBox="0 0 7 7" className="h-[7px] w-[7px]">
              <path d={exp === '-' ? 'M1 3.5H6' : 'M1 3.5H6M3.5 1V6'} stroke="#3c5aa0" />
            </svg>
          </button>
        )}
      </span>
      <label className="ml-[3px] flex items-center whitespace-nowrap">
        <span className="grid h-[13px] w-[13px] shrink-0 place-items-center">
          {radio ? (
            <input type="radio" name="barras" defaultChecked={state === 'R'} className="peer col-start-1 row-start-1 h-[13px] w-[13px] appearance-none rounded-full border border-[#333] bg-linear-to-br from-[#d5dbe6] to-white" />
          ) : (
            <input type="checkbox" checked={on} onChange={() => setOn(!on)} className="peer col-start-1 row-start-1 h-[13px] w-[13px] appearance-none border border-[#333] bg-linear-to-br from-white to-[#d5dbe6]" />
          )}
          {radio && <span className="pointer-events-none col-start-1 row-start-1 hidden h-[5px] w-[5px] rounded-full bg-black peer-checked:block" />}
          {!radio && (
            <svg viewBox="0 0 13 13" className="pointer-events-none col-start-1 row-start-1 hidden h-[13px] w-[13px] peer-checked:block">
              <path d="M3.5 6L5.5 8.5L9.5 4" fill="none" stroke="#000" strokeWidth="2" />
            </svg>
          )}
          {state === '2' && <span className="pointer-events-none col-start-1 row-start-1 h-[7px] w-[7px] bg-[#969696]" />}
        </span>
        <span className="mx-[3px] flex"><TreeIcon kind={icon} /></span>
        <span className={clsx('pl-0.5 leading-[18px]', level === 0 && icon === 'r' && 'font-bold')}>{text}</span>
      </label>
    </li>
  );
};

const Chevron = ({ up }: { up?: boolean }) => (
  <svg viewBox="0 0 9 7" className="h-[7px] w-[9px]">
    <path d={up ? 'M1 5.5L4.5 2L8 5.5' : 'M1 1.5L4.5 5L8 1.5'} fill="none" stroke="#505050" strokeWidth="2" />
  </svg>
);

const PanelButtons = () => (
  <span className="flex items-center gap-2">
    <button type="button" aria-label="Fijar">
      <svg viewBox="0 0 9 10" className="h-[10px] w-[9px]"><path d="M2.5 6V1.5H6.5V6M0.5 6.5H8.5M4.5 6.5V10M5.5 1.5V6" fill="none" stroke="#666" /></svg>
    </button>
    <button type="button" aria-label="Cerrar">
      <svg viewBox="0 0 9 9" className="h-[9px] w-[9px]"><path d="M1 1L8 8M8 1L1 8" stroke="#666" strokeWidth="1.2" /></svg>
    </button>
  </span>
);

const navTabs: { label: string; icon: React.ReactNode }[] = [
  { label: 'Datos', icon: <g><path d="M1 4H6L7 6H12V14H1Z" fill="#f2c830" stroke="#98770e" strokeWidth="0.7" /><Sheet x={4} y={2} w={12} h={7} /><Lens x={10} y={9} r={3.4} /></g> },
  { label: 'Mostrar', icon: <g><rect x="2" y="6" width="12" height="10" fill="#fff" stroke="#3d5fc0" /><path d="M4 10H12M4 12H12M4 14H12" stroke="#3d5fc0" /><path d="M6 6L10 2L17 3V6L10 8Z" fill="#b88a58" stroke="#4e3518" strokeWidth="0.7" /></g> },
  { label: 'Vistas', icon: <g><path d="M13 1L5 12" stroke="#2a4ab0" strokeWidth="3.4" /><path d="M2 16H16L13 12H6Z" fill="#3d5fc0" /><path d="M11 5Q17 9 13 14" fill="none" stroke="#5b78cc" strokeWidth="1.8" /></g> },
  { label: 'Resultados', icon: <g><path d="M1 5L9 2L17 6L10 14L4 11Z" fill="#1c70e0" stroke="#222" strokeWidth="0.7" /><path d="M4 6L9 4L14 7L9 11Z" fill="#28c840" /><path d="M8 7L17 6L10 13Z" fill="#f0d820" /><path d="M1 5L5 4L5 9Z" fill="#e02020" /></g> },
];

const Navigator = () => (
  <aside className="flex w-[404px] shrink-0 flex-col">
    <header className="flex h-5 shrink-0 items-center justify-between border-t border-[#e6e9f0] bg-[#b9bfca] pr-[5px] pl-1 text-[#444]">
      <h2>Navegador de proyectos - Mostrar</h2>
      <PanelButtons />
    </header>
    <div className="flex min-h-0 flex-1 border-x-3 border-t-3 border-b border-x-[#e3e8f3] border-t-[#e3e8f3] border-b-[#777] bg-[#fcfbf3]">
      <ul className="min-w-0 flex-1 overflow-hidden pl-0.5 font-['Noto_Sans','Open_Sans',sans-serif]">
        {rows.map((row, i) => <TreeRow key={i} row={row} />)}
      </ul>
      <div className="flex w-[15px] flex-col items-center bg-[#f0f0f0] py-1.5">
        <Chevron up />
        <span className="mt-[153px] h-[390px] w-full bg-[#cdcdcd]" />
        <span className="flex-1" />
        <Chevron />
      </div>
    </div>
    <nav className="flex h-6 shrink-0 items-start pl-1 text-[#555]">
      {navTabs.map((t) => (
        <button
          key={t.label}
          type="button"
          className={clsx('mr-1.5 flex h-[19px] items-center gap-0.5 px-0.5', t.label === 'Mostrar' && 'rounded-b-sm border-x border-b border-[#f6f8fb] bg-[#e4e8f0]')}
        >
          <svg viewBox="0 0 18 18" className="h-4 w-4">{t.icon}</svg>
          {t.label}
        </button>
      ))}
    </nav>
  </aside>
);

/* ---------- model view ---------- */

const scale = ['#0000a0', '#0000ff', '#0096ff', '#00f5f5', '#00e687', '#00ff00', '#ffff00', '#d2d200', '#ffaa00', '#ff0000', '#be0000'];

// Left edge of the buckled column at every colour change, top to bottom
const edge: [number, number][] = [
  [1122, 193], [1117, 208], [1112, 222], [1108, 237], [1103, 251], [1098, 267], [1093, 283], [1089, 301], [1084, 321], [1079, 342], [1074, 372],
  [1074, 508], [1079, 538], [1084, 560], [1089, 581], [1093, 599], [1098, 617], [1103, 633], [1108, 649], [1112, 664], [1117, 679], [1122, 694],
];
const bulge: [number, number][] = [[1074, 372], [1071, 394], [1070, 415], [1069, 440], [1070, 465], [1071, 486], [1074, 508]];

// Vertical faces as offsets from that edge: [x, y] of the left and right side
const faces: [number, number, number, number][] = [
  [0, 0, 16, 1],
  [16, 1, 29, -5],
  [25, 2, 40, 4],
  [40, 4, 60, -7],
];

const strip = (pts: [number, number][], f: [number, number, number, number]) =>
  [...pts.map(([x, y]) => `${x + f[0]},${y + f[1]}`), ...[...pts].reverse().map(([x, y]) => `${x + f[2]},${y + f[3]}`)].join(' ');

const Axes = ({ x, y }: { x: number; y: number }) => (
  <g transform={`translate(${x} ${y})`} fontSize="11" fontFamily="Liberation Sans, sans-serif">
    <path d="M0 0L-32 -3" stroke="#00e000" strokeWidth="2" />
    <path d="M-38 -3.5L-28 -6V0Z" fill="#109818" />
    <path d="M0 0L-12 5" stroke="#f00000" strokeWidth="2" />
    <path d="M-17 8L-12 2L-9 8Z" fill="#c00000" />
    <path d="M0 0V33" stroke="#0000f0" strokeWidth="2" />
    <path d="M-3 31H3L0 40Z" fill="#0000b0" />
    <text x="-49" y="0" fill="#00e000">Y</text>
    <text x="-22" y="13" fill="#e00000">X</text>
    <text x="-3" y="52" fill="#0000e0">Z</text>
  </g>
);

const Model = () => (
  <svg viewBox="410 101 1347 670" className="absolute inset-0 h-full w-full">
    {/* undeformed column */}
    <path d="M886 171L906 161L946 164V663L926 674L886 670Z" fill="#00009b" />
    <path d="M886.5 171V670M910.5 173V672M946.5 164V663" stroke="#6e0030" />
    <path d="M902 172V671M926 174V674" stroke="#820010" strokeWidth="2" />
    <path d="M913 154L931 155V171L927 173V163L916 167L913 165Z" fill="#2cf02c" />
    <path d="M932.5 155V172" stroke="#2cf02c" />
    <path d="M917 166L928 160" stroke="#109818" strokeWidth="3" />
    <rect x="914" y="166" width="4" height="4" fill="#900000" />
    <path d="M903 683L915 672L929 681L923 684Z" fill="#5cf05c" />
    <Axes x={916} y={667} />

    {/* deformed column */}
    <g stroke="#780505" strokeWidth="1">
      <path d="M1122 193L1143 183L1182 187L1162 197L1146 195L1138 195Z" fill="#00007d" />
      {[1, 0, 2, 3].map((k) => (
        <g key={k}>
          {edge.slice(0, -1).map((p, i) => (
            <polygon
              key={i}
              points={strip(i === 10 ? bulge : [p, edge[i + 1]], faces[k])}
              fill={scale[i <= 10 ? i : 21 - i - 1]}
            />
          ))}
        </g>
      ))}
    </g>
    <g fill="none" stroke="#780505" strokeWidth="2">
      <path d="M1122 193L1143 183L1150 184M1138 194L1149 187M1122 193L1138 194M1146 195L1163 187L1182 187L1162 197Z" />
      {[16, 40].map((dx) => (
        <polyline key={dx} points={[...edge.slice(0, 10), ...bulge, ...edge.slice(12)].map(([x, y]) => `${x + dx},${y + (dx === 16 ? 1 : 4)}`).join(' ')} />
      ))}
    </g>
    <path d="M1149 176L1168 178V193L1161 194V187L1150 185Z" fill="#2cf02c" />
    <path d="M1152 188L1163 182" stroke="#109818" strokeWidth="3" />
    <rect x="1150" y="188" width="4" height="4" fill="#900000" />
    <path d="M1139 706L1148 697H1157L1165 703L1157 708Z" fill="#3ee03e" />
    <path d="M1148 697H1157L1165 703H1150Z" fill="#84f884" />
    <path d="M1152 255V622" stroke="#000" strokeWidth="2" />
    <path d="M1119 437L1152 440" stroke="#8c8c00" strokeDasharray="1 1" />
    <text x="1084" y="438" fontSize="9" fontFamily="Liberation Sans, sans-serif" fill="#a0a000">1.0</text>

    <Axes x={465} y={664} />
  </svg>
);

/* ---------- colour panel ---------- */

const legend = ['1.0', '0.9', '0.8', '0.7', '0.6', '0.5', '0.5', '0.4', '0.3', '0.2', '0.1', '0.0'];

const ColorPanel = () => (
  <aside className="flex w-[158px] shrink-0 flex-col">
    <header className="flex h-5 shrink-0 items-center justify-between border-t border-[#e6e9f0] bg-[#b9bfca] pr-[5px] pl-1 text-[#444]">
      <h2>Panel</h2>
      <PanelButtons />
    </header>
    <div className="flex flex-1 flex-col border border-[#a5adba] border-b-[#777] bg-[#f0f0f0] px-[5px] pt-1">
      <p className="leading-4">Vector propio -<br />u [-]</p>
      <div className="mt-px border-t border-l border-t-[#888] border-l-[#aaa] bg-[#f9f6ef] pt-[3px] pb-[7px]">
        <svg viewBox="0 0 144 204" className="mx-auto h-[204px] w-[144px] font-['Open_Sans',sans-serif]">
          {legend.map((t, i) => (
            <g key={i}>
              {i < 11 && <rect x="45.5" y={7.5 + i * 17} width="26" height="17" fill={scale[10 - i]} stroke="#000" />}
              <path d={`M72 ${7.5 + i * 17}H78`} stroke="#000" />
              <text x="82" y={11 + i * 17} fontSize="11" fill="#111">{t}</text>
            </g>
          ))}
        </svg>
      </div>
      <dl className="mt-2.5 grid grid-cols-[auto_auto_auto] justify-center gap-x-1.5 border border-t-[#d4e0f6] border-r-[#9a9ae8] border-b-[#9a9ae8] border-l-[#d4e0f6] bg-[#eef2fa] text-[11px] leading-[17px]">
        <dt>Máx</dt><span>:</span><dd className="pl-1">1.0</dd>
        <dt>Mín</dt><span>:</span><dd className="pl-1">0.0</dd>
      </dl>
      <button type="button" className="mx-1 mt-5 h-[23px] border border-[#adadad] bg-[#e1e1e1]">RF-STABILITY</button>
      <button type="button" aria-label="Buscar" className="mt-[94px] -mr-0.5 flex h-[21px] w-[25px] items-center justify-center self-end border border-[#adadad] bg-[#e1e1e1]">
        <svg viewBox="0 0 18 18" className="h-4 w-4"><path d="M1 1.500H13M1 4.500H13M1 7.500H13M1 10.500H13" stroke="#555" strokeWidth="1.2" /><Lens x={9} y={9} r={4} /></svg>
      </button>
    </div>
    <nav className="flex h-[22px] shrink-0 items-start gap-3 pl-1">
      <button type="button" aria-label="Escala" className="flex h-[19px] w-[23px] items-center justify-center rounded-b-sm border-x border-b border-[#dff4f4] bg-[#e6e8ec]">
        <svg viewBox="0 0 18 18" className="h-4 w-4">
          <path d="M2 1H9V4H2Z" fill="#f00000" /><path d="M2 4H9V7.500H2Z" fill="#ffa800" /><path d="M2 7.500H9V11H2Z" fill="#00e000" /><path d="M2 11H9V14H2Z" fill="#00e8e8" /><path d="M2 14H9V17.500H2Z" fill="#0000f0" />
          <path d="M11 2.500H15V4.500H11ZM11 6.500H15V8.500H11ZM11 10.500H15V12.500H11ZM11 14.500H15V16.500H11Z" fill="none" stroke="#666" />
        </svg>
      </button>
      <button type="button" aria-label="Factores" className="flex h-[19px] items-center">
        <svg viewBox="0 0 18 18" className="h-[17px] w-[17px]">
          <path d="M2 4Q9 1 16 4M8 3H10V14H8ZM5 15.500H13" fill="#d8c050" stroke="#5c4c14" strokeWidth="1.2" />
          <path d="M1 12L4 5L7 12ZM11 12L14 5L17 12Z" fill="none" stroke="#6e5c1c" />
          <path d="M0.500 12H7.500L6 14H2ZM10.500 12H17.500L16 14H12Z" fill="#d8c050" stroke="#5c4c14" strokeWidth="0.6" />
        </svg>
      </button>
      <button type="button" aria-label="Filtro" className="ml-0.5 flex h-[19px] items-center">
        <svg viewBox="0 0 18 18" className="h-4 w-4">
          <path d="M13 1L6 11" stroke="#222" strokeWidth="3.4" /><path d="M2 17H16V14H10L7 12L3 14Z" fill="#222" /><path d="M11 6Q17 10 13 15" fill="none" stroke="#444" strokeWidth="2" />
        </svg>
      </button>
    </nav>
  </aside>
);

/* ---------- results table ---------- */

const data: [string, string, string, string][] = [
  ['Carga total en dirección X', '0.00', 'kN', ''],
  ['Suma de esfuerzos en apoyos en X', '0.00', 'kN', ''],
  ['Carga total en dirección Y', '0.00', 'kN', ''],
  ['Suma de esfuerzos en apoyos en Y', '0.00', 'kN', ''],
  ['Carga total en dirección Z', '5000.00', 'kN', ''],
  ['Suma de esfuerzos en apoyos en Z', '5000.00', 'kN', 'Desviación:  0.00 %'],
  ['Resultante de reacciones respecto a X', '0.000', 'kNm', 'En el centro de gravedad del modelo (X: 0.000, Y: -2.000, Z: -4.000 m)'],
  ['Resultante de reacciones respecto a Y', '0.000', 'kNm', 'En el centro de gravedad del modelo'],
  ['Resultante de reacciones respecto a Z', '0.000', 'kNm', 'En el centro de gravedad del modelo'],
  ['Máximo desplazamiento en dirección X', '0.0', 'mm', ''],
  ['Máximo desplazamiento en dirección Y', '0.0', 'mm', ''],
  ['Máximo desplazamiento en dirección Z', '4.4', 'mm', 'Barra núm. 50,  x: 0.000 m'],
  ['Máximo desplazamiento vectorial', '4.4', 'mm', 'Barra núm. 50,  x: 0.000 m'],
  ['Máximo giro respecto al eje X', '0.0', 'mrad', ''],
];

const tabs = ['Resultados - Resumen', 'Nudos - Esfuerzos en apoyos', 'Nudos - Deformaciones', 'Barras - Deformaciones locales', 'Barras - Deformaciones globales', 'Barras - Esfuerzos internos', 'Barras - Deformaciones', 'Barras - Coeficientes para pandeo', 'Esbelteces de barras', 'Secciones - Esfuerzos internos'];

const ResultsPane = () => {
  const [tab, setTab] = useState(0);
  return (
    <section className="flex shrink-0 flex-col bg-[#f0f0f0]">
      <div className="bg-linear-to-b from-[#e9edf7] via-[#e9edf7] to-[#cfd4de]">
        <header className="flex h-5 items-center justify-between pr-[5px] pl-1 text-[#555]">
          <h2>4.0 Resultados - Resumen</h2>
          <PanelButtons />
        </header>
        <div className="flex h-[25px] items-center pl-2">
          <ToolItems items={tableBar} combo={<Combo value="CC1 - Empuje" label="Caso de carga" className="mr-0.5 ml-[3px] w-[134px]" />} />
        </div>
      </div>
      <div className="flex border-y border-[#666] pt-0.5 pb-[7px] pl-[3px] font-['Liberation_Sans',sans-serif] text-black">
        <table className="w-full min-w-0 table-fixed border-collapse text-[11px] leading-[14px]">
          <colgroup>
            <col className="w-[45px]" />
            <col className="w-[288px]" />
            <col className="w-[72px]" />
            <col className="w-[48px]" />
            <col className="w-[396px]" />
            <col />
          </colgroup>
          <thead>
            <tr className="h-[15px]">
              <th rowSpan={2} className="border border-[#888] bg-[#ececec]" />
              <th className="border border-[#888] bg-[#0078d7] p-0 font-normal text-white">A</th>
              {['B', 'C', 'D'].map((c) => <th key={c} className="border border-[#777] bg-[#e1e1e1] p-0 font-normal">{c}</th>)}
              <th className="border-y border-[#999] bg-[#e1e1e1] p-0" />
            </tr>
            <tr className="h-[17px]">
              {['Descripción', 'Valor', 'Unidad', 'Comentario'].map((c) => <th key={c} className="border border-[#999] bg-[#f0f0f0] p-0 font-normal">{c}</th>)}
              <th className="border-y border-[#999]" />
            </tr>
          </thead>
          <tbody>
            <tr className="h-4">
              <td className="border border-[#777] bg-[#0078d7] p-0" />
              <td colSpan={4} className="border border-dotted border-black bg-white p-0 text-xs leading-[14px] font-bold">
                <span className="flex items-center gap-[3px] pl-0.5">
                  <button type="button" aria-label="Contraer" className="flex h-[9px] w-[9px] items-center justify-center border border-black"><span className="h-px w-[5px] bg-black" /></button>
                  CC1 - Druckkraft
                </span>
              </td>
              <td className="border-y border-[#999]" />
            </tr>
            {data.map(([name, value, unit, note], i) => {
              const cell = clsx('border border-[#a0a0a0] p-0 whitespace-pre', [0, 1, 4, 5].includes(i) ? 'bg-[#f8faff]' : 'bg-white');
              return (
                <tr key={name} className="h-4">
                  <td className="border border-[#777] bg-[#e1e1e1] p-0" />
                  <td className={cell}>
                    <span className="ml-[7px] flex h-[15px] items-center border-l border-[#d0d0d0]">
                      <span className="mr-2 h-px w-[11px] bg-[#d0d0d0]" />
                      {name}
                    </span>
                  </td>
                  <td className={clsx(cell, 'pr-1 text-right')}>{value}</td>
                  <td className={clsx(cell, 'pl-[3px]')}>{unit}</td>
                  <td className={clsx(cell, 'pl-1')}>{note}</td>
                  <td className="border-y border-[#a0a0a0]" />
                </tr>
              );
            })}
          </tbody>
        </table>
        <div className="mr-[3px] flex w-4 shrink-0 flex-col items-center py-1.5">
          <Chevron up />
          <span className="mt-1 h-[89px] w-full bg-[#cdcdcd]" />
          <span className="flex-1" />
          <Chevron />
        </div>
      </div>
      <div role="tablist" className="flex h-9 items-start font-['Liberation_Sans',sans-serif] text-black">
        {tabs.map((t, i) => (
          <button
            key={t}
            type="button"
            role="tab"
            aria-selected={i === tab}
            onClick={() => setTab(i)}
            className={clsx('h-4 rounded-b-xs border-r border-b border-[#666] px-0.5 leading-[15px] whitespace-nowrap', i === tab ? 'bg-[#f0f0f0]' : 'bg-[#e1e1e1]')}
          >
            {t}
          </button>
        ))}
      </div>
    </section>
  );
};

/* ---------- window ---------- */

const menus = ['Archivo', 'Edición', 'Ver', 'Insertar', 'Cálculo', 'Resultados', 'Herramientas', 'Tabla', 'Opciones', 'Módulos adicionales', 'Ventana', 'Ayuda'];

const modes: [string, boolean][] = [['FORZC', true], ['REJILLA', false], ['CARTES', true], ['REFENT', false], ['GLN', true], ['DXF', true]];

const App: React.FC = () => (
  <div className="flex h-screen flex-col overflow-hidden bg-[#cfd3dc] font-['Open_Sans',sans-serif] text-[11px] text-black">
    <div className="flex h-[23px] shrink-0 items-center bg-white pr-0.5 pl-0.5">
      <svg viewBox="0 0 18 18" className="mr-[3px] h-[18px] w-[18px]">
        <path d="M5 3L11 1L16 5V14L10 16L5 11Z" fill="#7f95bd" stroke="#39486a" />
        <path d="M11 1L10 7L16 5M10 7V16" fill="none" stroke="#39486a" />
        <path d="M7 7H2V11H5Q7 12 5 14H1" fill="none" stroke="#e0a818" strokeWidth="2.4" />
      </svg>
      <h1 className="flex-1">RFEM 5.20.00 x64 - [1*]</h1>
      <button type="button" aria-label="Minimizar" className="flex w-[46px] justify-center"><svg viewBox="0 0 10 10" className="h-2.5 w-2.5"><path d="M0 5.5H10" stroke="#000" /></svg></button>
      <button type="button" aria-label="Restaurar" className="flex w-[46px] justify-center"><svg viewBox="0 0 10 10" className="h-2.5 w-2.5"><path d="M0.5 2.5H7.5V9.5H0.5ZM2.5 2.5V0.5H9.5V7.5H7.5" fill="none" stroke="#000" /></svg></button>
      <button type="button" aria-label="Cerrar" className="flex w-[46px] justify-center"><svg viewBox="0 0 10 10" className="h-2.5 w-2.5"><path d="M0 0L10 10M10 0L0 10" stroke="#000" /></svg></button>
    </div>

    <nav className="flex h-6 shrink-0 items-center pr-1 pl-1 text-[#44484f]">
      <span className="mr-1 h-[15px] border-l-2 border-dotted border-[#a2a8b4]" />
      <svg viewBox="0 0 16 16" className="mr-[9px] h-4 w-4"><rect width="16" height="16" fill="#1b2f6e" /><path d="M0 11.500H16M5.500 3V15M10.500 3V15M0 9L5 3.500H11L16 9M2.500 11V7M13.500 11V7" stroke="#fff" fill="none" /></svg>
      {menus.map((m) => (
        <button key={m} type="button" className="mr-[13px] px-px">
          {m === 'Ventana' ? <>Ve<u>n</u>tana</> : <><u>{m[0]}</u>{m.slice(1)}</>}
        </button>
      ))}
      <span className="flex flex-1 items-center justify-end gap-2">
        <button type="button" aria-label="Minimizar documento"><svg viewBox="0 0 9 9" className="h-[9px] w-[9px]"><path d="M1 8H7" stroke="#666" strokeWidth="2" /></svg></button>
        <button type="button" aria-label="Restaurar documento"><svg viewBox="0 0 9 9" className="h-[9px] w-[9px]"><path d="M0.5 3.5H6.5V8.5H0.5ZM2.5 3V1.5H8.5V6.5H7" fill="none" stroke="#777" /></svg></button>
        <button type="button" aria-label="Cerrar documento"><svg viewBox="0 0 9 9" className="h-[9px] w-[9px]"><path d="M1 1L8 8M8 1L1 8" stroke="#777" strokeWidth="2" /></svg></button>
      </span>
    </nav>

    <div className="flex shrink-0 gap-px">
      {barsTop.map((b, i) => (
        <ToolBar key={i} items={b} combo={<Combo value="RF-STABILITY CA2 - Con modificación" label="Caso" className="mx-0.5 w-[216px]" />} />
      ))}
    </div>
    <div className="mt-px flex shrink-0 gap-px">
      {barsBottom.map((b, i) => <ToolBar key={i} items={b} />)}
    </div>

    <div className="mt-px flex min-h-0 flex-1">
      <Navigator />
      <main className="ml-1 flex min-w-0 flex-1 flex-col">
        <div className="flex min-h-0 flex-1 pb-[5px]">
          <div className="relative flex min-w-0 flex-1 flex-col justify-between border-t-2 border-r border-b border-l-2 border-t-[#666] border-r-white border-b-white border-l-[#777] bg-white pt-[5px] pb-1 pl-1 font-['Liberation_Sans',sans-serif] leading-[14px]">
            <Model />
            <p className="relative">Vector propio - u [-]<br />RF-STABILITY CA2 - Con modificación<br />Vector propio núm. 1&nbsp; -&nbsp; 0.89</p>
            <p className="relative">Máx.u: 1.0, Mín. u: 0.0 -</p>
          </div>
          <div className="w-[5px] shrink-0" />
          <ColorPanel />
        </div>
        <ResultsPane />
      </main>
    </div>

    <footer className="flex h-[21px] shrink-0 items-stretch justify-end border-t border-[#8f959f] bg-linear-to-b from-[#cdd2db] via-[#a9afb9] to-[#bcc1cb] pt-px text-xs text-[#222]">
      {modes.map(([m, on]) => (
        <button key={m} type="button" className={clsx('mr-0.5 border px-0.5 leading-4', on ? 'border-t-black border-r-white border-b-white border-l-black' : 'border-t-white border-r-[#999] border-b-[#999] border-l-white')}>{m}</button>
      ))}
      <span className="w-[189px] border-l border-[#8f959f]" />
      <span className="w-[88px] border-l border-[#8f959f]" />
      <span className="w-[74px] border-l border-[#8f959f]" />
      <span className="w-[74px] border-l border-[#8f959f]" />
      <span className="w-[73px] border-l border-[#8f959f]" />
    </footer>
  </div>
);

export default App;
